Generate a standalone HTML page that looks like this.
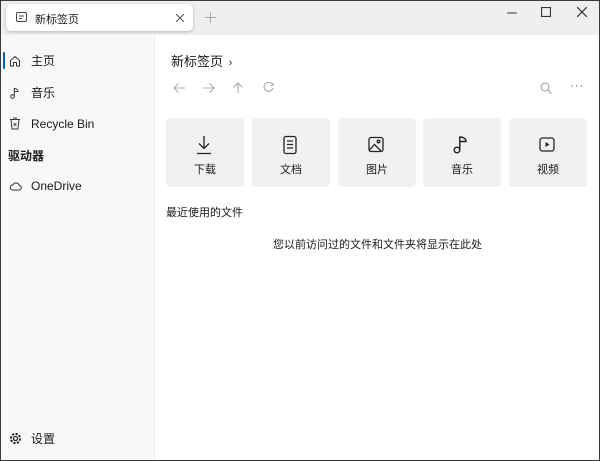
<!DOCTYPE html>
<html><head><meta charset="utf-8"><style>
*{margin:0;padding:0;box-sizing:border-box}
body{width:600px;height:461px;overflow:hidden;font-family:"Liberation Sans","Noto Sans CJK SC",sans-serif;color:#1a1a1a;background:#fff;position:relative}
.win{position:absolute;left:0;top:0;width:600px;height:461px;border:1px solid #3a3a3a}
.title{position:absolute;left:1px;top:1px;width:598px;height:34px;background:#f0efee}
.tab{position:absolute;left:6px;top:4px;width:187px;height:27px;background:#fff;border-radius:5px;box-shadow:0 1px 3px rgba(0,0,0,.25);font-size:11px}
.side{position:absolute;left:1px;top:35px;width:154px;height:425px;background:#f9f8f7;border-right:1px solid #ebebeb}
.it{position:absolute;left:0;font-size:12px;display:flex;align-items:center}
.it svg{position:absolute;left:8px}
.it span{position:absolute;left:30px;white-space:nowrap}
.tile{position:absolute;top:118px;width:78px;height:69px;background:#f2f1f0;border-radius:4px;font-size:11px;text-align:center}
.tile svg{position:absolute;left:29px;top:17px}
.tile span{position:absolute;left:0;right:0;top:43px}
</style></head><body>
<div class="win"></div>
<div class="title"></div>
<div class="tab">
<svg style="position:absolute;left:10px;top:8px" width="11" height="10" viewBox="0 0 11 10"><rect x=".5" y=".5" width="10" height="9" rx="1.5" fill="none" stroke="#444"/><line x1="3" y1="4" x2="8" y2="4" stroke="#444"/><line x1="3" y1="6.5" x2="6" y2="6.5" stroke="#444"/></svg>
<span style="position:absolute;left:29px;top:7px">新标签页</span>
<svg style="position:absolute;left:170px;top:10px" width="8" height="8"><path d="M0 0L8 8M8 0L0 8" stroke="#555"/></svg>
</div>
<svg style="position:absolute;left:205px;top:12px" width="11" height="11"><path d="M5.5 0V11M0 5.5H11" stroke="#aaa"/></svg>
<svg style="position:absolute;left:507px;top:12px" width="10" height="2"><path d="M0 1H10" stroke="#333"/></svg>
<svg style="position:absolute;left:541px;top:7px" width="10" height="10"><rect x=".5" y=".5" width="9" height="9" fill="none" stroke="#333" stroke-width="1.2"/></svg>
<svg style="position:absolute;left:577px;top:7px" width="10" height="10"><path d="M0 0L10 10M10 0L0 10" stroke="#333" stroke-width="1.2"/></svg>

<div class="side">
<div style="position:absolute;left:2px;top:17px;width:2px;height:17px;background:#0063b1;border-radius:1px"></div>
<div class="it" style="top:17px;height:17px"><svg width="12" height="12" viewBox="0 0 12 12"><path d="M1.5 5.5L6 1.5L10.5 5.5V11H7.5V7.5H4.5V11H1.5Z" fill="none" stroke="#333"/></svg><span>主页</span></div>
<div class="it" style="top:49px;height:17px"><svg width="12" height="12" viewBox="0 0 12 12"><circle cx="3.5" cy="9.5" r="1.8" fill="none" stroke="#333"/><path d="M5.3 9.5V1.5C7 1.5 9 2.5 9 4.5H6" fill="none" stroke="#333"/></svg><span>音乐</span></div>
<div class="it" style="top:80px;height:17px"><svg width="12" height="13" viewBox="0 0 12 13"><path d="M1 2.5H11M2 2.5L3 12H9L10 2.5M4 1H8" fill="none" stroke="#333"/><path d="M4.5 6L7.5 9M7.5 6L4.5 9" stroke="#333" stroke-width=".8"/></svg><span>Recycle Bin</span></div>
<div style="position:absolute;left:7px;top:112px;font-size:12px;font-weight:bold">驱动器</div>
<div class="it" style="top:142px;height:17px"><svg width="13" height="10" viewBox="0 0 13 10"><path d="M3.5 9H10a2.2 2.2 0 0 0 .3-4.4A3.3 3.3 0 0 0 4 4 2.5 2.5 0 0 0 3.5 9Z" fill="none" stroke="#333"/></svg><span>OneDrive</span></div>
<div class="it" style="top:395px;height:17px"><svg width="13" height="13" viewBox="0 0 13 13"><circle cx="6.5" cy="6.5" r="2" fill="none" stroke="#222" stroke-width="1.2"/><circle cx="6.5" cy="6.5" r="4.6" fill="none" stroke="#222" stroke-dasharray="2.2 1.4" stroke-width="2"/></svg><span>设置</span></div>
</div>

<div style="position:absolute;left:171px;top:51px;font-size:13px">新标签页 <span style="font-size:11px;margin-left:2px">›</span></div>
<svg style="position:absolute;left:173px;top:82px" width="110" height="12" viewBox="0 0 110 12" fill="none" stroke="#aaa" stroke-width="1.1"><path d="M12 6H1M5.5 1.5L1 6l4.5 4.5"/><path d="M30 6h11M36.5 1.5L41 6l-4.5 4.5"/><path d="M65 11V1M60.5 5.5L65 1l4.5 4.5"/><path d="M99.5 2.5A4.5 4.5 0 1 0 100 6M100 1v2.5h-2.5"/></svg>
<svg style="position:absolute;left:540px;top:82px" width="12" height="12"><circle cx="5" cy="5" r="4" fill="none" stroke="#999"/><path d="M8 8L11.5 11.5" stroke="#999"/></svg>
<div style="position:absolute;left:570px;top:80px;font-size:11px;color:#555;letter-spacing:1px">···</div>

<div class="tile" style="left:166px"><svg width="18" height="20" viewBox="0 0 18 20" fill="none" stroke="#222" stroke-width="1.3"><path d="M9 1V13M4 8.5L9 13.5L14 8.5M2 18.5H16"/></svg><span>下载</span></div>
<div class="tile" style="left:252px"><svg width="18" height="20" viewBox="0 0 18 20" fill="none" stroke="#222" stroke-width="1.3"><rect x="3" y="1.5" width="12" height="17" rx="2"/><path d="M6 6H12M6 9.5H12M6 13H12"/></svg><span>文档</span></div>
<div class="tile" style="left:338px"><svg width="18" height="20" viewBox="0 0 18 20" fill="none" stroke="#222" stroke-width="1.3"><rect x="2" y="2.5" width="14" height="14" rx="2"/><circle cx="11.5" cy="6.5" r="1.3"/><path d="M2.5 15L7.5 9.5L14 16"/></svg><span>图片</span></div>
<div class="tile" style="left:423px"><svg width="18" height="20" viewBox="0 0 18 20" fill="none" stroke="#222" stroke-width="1.4"><circle cx="5" cy="15" r="2.8"/><path d="M7.8 15V2C11 2 14 3.5 14 6.5H8"/></svg><span>音乐</span></div>
<div class="tile" style="left:509px"><svg width="18" height="20" viewBox="0 0 18 20" fill="none" stroke="#222" stroke-width="1.3"><rect x="2" y="3" width="14" height="13" rx="2.5"/><path d="M7.5 7v5l4-2.5z" fill="#222" stroke="none"/></svg><span>视频</span></div>

<div style="position:absolute;left:166px;top:204px;font-size:11px">最近使用的文件</div>
<div style="position:absolute;left:273px;top:236px;font-size:11px">您以前访问过的文件和文件夹将显示在此处</div>
</body></html>
